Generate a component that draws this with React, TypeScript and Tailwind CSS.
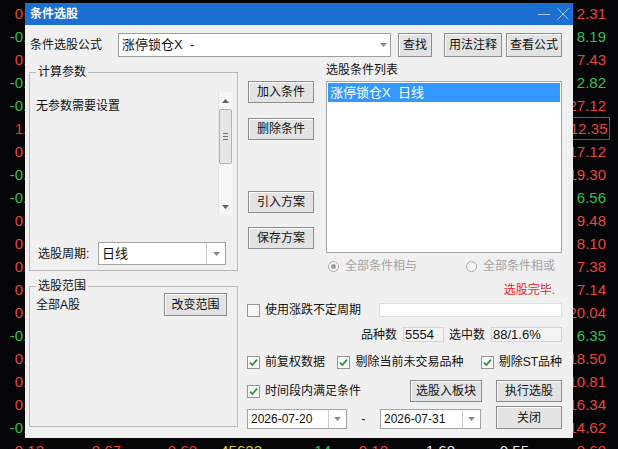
import React from "react";

const tone = {
  r: "text-[#e4463f]",
  R: "text-[#ff2f2a]",
  g: "text-[#2fc04d]",
  y: "text-[#d8c84a]",
  w: "text-[#e4e4e4]",
};

type Tone = keyof typeof tone;
type Cell = [string, Tone] | null;

const leftCol: [string, Tone][] = [
  ["0.35", "r"], ["-0.21", "g"], ["0.56", "r"], ["-0.44", "g"], ["-0.18", "g"],
  ["1.02", "R"], ["0.27", "r"], ["-0.36", "g"], ["-0.62", "g"], ["0.13", "r"],
  ["0.48", "r"], ["0.09", "r"], ["0.71", "r"], ["0.25", "r"], ["-0.33", "g"],
  ["0.52", "r"], ["0.17", "r"], ["0.84", "r"], ["-0.29", "g"],
];

const rightCol: [string, Tone][] = [
  ["2.31", "r"], ["8.19", "g"], ["7.43", "r"], ["2.82", "g"], ["27.12", "r"],
  ["12.35", "r"], ["17.12", "r"], ["19.30", "r"], ["6.56", "g"], ["9.48", "r"],
  ["8.10", "r"], ["7.38", "r"], ["7.14", "r"], ["20.04", "r"], ["6.35", "g"],
  ["18.50", "r"], ["10.81", "r"], ["16.34", "r"], ["14.62", "r"],
];

const lastRow: Cell[] = [
  ["0.12", "r"], ["0.67", "r"], ["0.68", "r"], ["45623", "y"], ["14", "g"],
  ["0.10", "r"], ["1.68", "w"], ["0.55", "w"], ["0.68", "r"],
];

const rows: Cell[][] = [
  ...leftCol.map((l, i) => [l, null, null, null, null, null, null, null, rightCol[i]] as Cell[]),
  lastRow,
];

function Arrow() {
  return (
    <svg width="7" height="4" viewBox="0 0 7 4">
      <path d="M0 0 H7 L3.5 4 Z" fill="#8a8a8a" />
    </svg>
  );
}

function Btn({ label, className }: { label: string; className: string }) {
  return (
    <button className={`flex items-center justify-center border border-[#8c8c8c] bg-[#e3e3e3] shadow-[inset_1px_1px_0_#fdfdfd] text-[12px] text-[#111] ${className}`}>
      {label}
    </button>
  );
}

function Check({ checked, label }: { checked?: boolean; label: string }) {
  return (
    <label className="flex items-center whitespace-nowrap">
      <span className="shrink-0 w-[13px] h-[13px] border border-[#959595] bg-[#f8f8f8] flex items-center justify-center">
        {checked && (
          <svg width="9" height="9" viewBox="0 0 9 9">
            <path d="M1 4.6 L3.4 7 L8 1.6" stroke="#23952c" strokeWidth="1.7" fill="none" />
          </svg>
        )}
      </span>
      <span className="ml-[5px] text-[12px]">{label}</span>
    </label>
  );
}

function Radio({ on, label }: { on?: boolean; label: string }) {
  return (
    <div className="flex items-center text-[#a3a3a3]">
      <span className="w-[11px] h-[11px] rounded-full border border-[#a8a8a8] bg-[#f6f6f6] flex items-center justify-center">
        {on && <span className="w-[5px] h-[5px] rounded-full bg-[#9c9c9c]" />}
      </span>
      <span className="ml-[6px] text-[12px]">{label}</span>
    </div>
  );
}

function DateBox({ value, className }: { value: string; className: string }) {
  return (
    <div className={`flex h-[20px] border border-[#a3a3a3] bg-white ${className}`}>
      <div className="flex-1 flex items-center pl-[3px] text-[12px]">{value}</div>
      <div className="w-[18px] border-l border-[#cdcdcd] flex items-center justify-center">
        <Arrow />
      </div>
    </div>
  );
}

export default function App() {
  return (
    <div className="relative w-[618px] h-[449px] overflow-hidden bg-[#050508] font-['Liberation_Sans','Noto_Sans_CJK_SC',sans-serif]">
      {/* quote table behind the dialog */}
      <div className="flex flex-col pt-[2px] text-[15px]">
        {rows.map((row, i) => (
          <div key={i} className="grid grid-cols-[44px_77px_76px_65px_69px_57px_67px_74px_77px] h-[23px] leading-[23px]">
            {row.map((c, j) => (
              <div key={j} className={`text-right ${c ? tone[c[1]] : ""}`}>
                {c && i === 5 && j === 8 ? (
                  <span className="inline-block border border-[#5c5c5c] pl-[40px] pr-[1px] -mr-[2px] leading-[21px]">{c[0]}</span>
                ) : (
                  c?.[0]
                )}
              </div>
            ))}
          </div>
        ))}
      </div>

      {/* 条件选股 dialog */}
      <div className="absolute left-[25px] top-[3px] w-[548px] h-[435px] bg-[#f0f0f0] flex flex-col text-[#111]">
        <div className="h-[22px] bg-[#1b6fd1] flex items-center pl-[5px] pr-[4px]">
          <span className="text-white text-[12px] font-bold">条件选股</span>
          <div className="ml-auto flex items-center gap-[7px]">
            <svg width="12" height="12" viewBox="0 0 12 12">
              <path d="M0 6.5 H12" stroke="#a9c8f0" strokeWidth="1" />
            </svg>
            <svg width="12" height="12" viewBox="0 0 12 12">
              <path d="M0.5 0.5 L11.5 11.5 M11.5 0.5 L0.5 11.5" stroke="#a9c8f0" strokeWidth="1" />
            </svg>
          </div>
        </div>

        <div className="flex flex-col pt-[8px] pl-[4px] pr-[11px]">
          {/* formula row */}
          <div className="flex items-center h-[24px]">
            <span className="w-[89px] pl-[1px] text-[12px]">条件选股公式</span>
            <div className="w-[273px] h-[24px] flex border border-[#9f9f9f] bg-white">
              <div className="flex-1 flex items-center pl-[3px] text-[13px] whitespace-pre">涨停锁仓X  -</div>
              <div className="w-[14px] flex items-center justify-center">
                <Arrow />
              </div>
            </div>
            <Btn label="查找" className="ml-[7px] w-[34px] h-[24px]" />
            <Btn label="用法注释" className="ml-[12px] w-[58px] h-[24px]" />
            <Btn label="查看公式" className="ml-[4px] w-[56px] h-[24px]" />
          </div>

          <div className="flex mt-[7px]">
            {/* left column */}
            <div className="w-[209px] flex flex-col">
              <fieldset className="h-[207px] border border-[#b9b9b9]">
                <legend className="ml-[6px] px-[2px] text-[12px] leading-[17px]">计算参数</legend>
                <div className="flex mt-[11px]">
                  <div className="flex-1 pl-[6px] pt-[6px] text-[12px] leading-[16px]">无参数需要设置</div>
                  <div className="w-[14px] h-[123px] mr-[5px] flex flex-col items-center bg-[#f7f7f7] border-l border-[#e4e4e4]">
                    <div className="h-[17px] flex items-center justify-center">
                      <svg width="7" height="4" viewBox="0 0 7 4">
                        <path d="M0 4 H7 L3.5 0 Z" fill="#5f5f5f" />
                      </svg>
                    </div>
                    <div className="w-[13px] h-[55px] border border-[#b3b3b3] rounded-[2px] bg-[#e6e6e6] flex flex-col items-center justify-center gap-[2px]">
                      <span className="w-[5px] h-px bg-[#6d6d6d]" />
                      <span className="w-[5px] h-px bg-[#6d6d6d]" />
                      <span className="w-[5px] h-px bg-[#6d6d6d]" />
                    </div>
                    <div className="flex-1" />
                    <div className="h-[17px] flex items-center justify-center">
                      <svg width="7" height="4" viewBox="0 0 7 4">
                        <path d="M0 0 H7 L3.5 4 Z" fill="#5f5f5f" />
                      </svg>
                    </div>
                  </div>
                </div>
                <div className="flex items-center mt-[27px]">
                  <span className="w-[68px] pl-[8px] text-[12px]">选股周期:</span>
                  <div className="w-[128px] h-[23px] flex border border-[#a3a3a3] bg-white">
                    <div className="flex-1 flex items-center pl-[3px] text-[13px]">日线</div>
                    <div className="w-[19px] border-l border-[#cdcdcd] flex items-center justify-center">
                      <Arrow />
                    </div>
                  </div>
                </div>
              </fieldset>

              <fieldset className="mt-[7px] h-[149px] border border-[#b9b9b9]">
                <legend className="ml-[6px] px-[2px] text-[12px] leading-[17px]">选股范围</legend>
                <div className="flex items-start justify-between -mt-[2px] pl-[6px] pr-[10px]">
                  <span className="mt-[4px] text-[12px] leading-[16px]">全部A股</span>
                  <Btn label="改变范围" className="w-[63px] h-[23px]" />
                </div>
              </fieldset>
            </div>

            {/* right area */}
            <div className="ml-[9px] w-[315px] flex flex-col">
              <div className="flex">
                <div className="w-[67px] pl-[1px] flex flex-col">
                  <Btn label="加入条件" className="mt-[17px] w-[66px] h-[22px]" />
                  <Btn label="删除条件" className="mt-[15px] w-[66px] h-[22px]" />
                  <Btn label="引入方案" className="mt-[51px] w-[66px] h-[22px]" />
                  <Btn label="保存方案" className="mt-[14px] w-[66px] h-[22px]" />
                </div>
                <div className="ml-[12px] w-[236px] flex flex-col">
                  <span className="text-[12px] leading-[12px]">选股条件列表</span>
                  <div className="mt-[5px] h-[172px] border border-[#a6a6a6] bg-white p-px">
                    <div className="h-[19px] bg-[#3399ff] text-white text-[13px] leading-[19px] pl-[2px] whitespace-pre">涨停锁仓X  日线</div>
                  </div>
                  <div className="mt-[6px] h-[14px] flex items-center justify-between pl-[2px] pr-[7px]">
                    <Radio on label="全部条件相与" />
                    <Radio label="全部条件相或" />
                  </div>
                </div>
              </div>

              <div className="mt-[10px] h-[14px] leading-[14px] text-right pr-[7px] text-[12px] text-[#e8262a]">选股完毕.</div>

              <div className="mt-[6px] h-[14px] flex items-center">
                <Check label="使用涨跌不定周期" />
                <div className="ml-auto w-[183px] h-[14px] border border-[#dedede] bg-white" />
              </div>

              <div className="mt-[10px] h-[15px] flex items-center justify-end text-[12px]">
                <span>品种数</span>
                <span className="ml-[6px] w-[41px] h-[15px] border border-[#d3d3d3] bg-[#f3f3f3] pl-px text-[13px] leading-[13px]">5554</span>
                <span className="ml-[5px]">选中数</span>
                <span className="ml-[6px] w-[71px] h-[15px] border border-[#d3d3d3] bg-[#f3f3f3] pl-px text-[13px] leading-[13px]">88/1.6%</span>
              </div>

              <div className="mt-[13px] h-[14px] flex items-center">
                <div className="w-[91px]">
                  <Check checked label="前复权数据" />
                </div>
                <div className="w-[144px]">
                  <Check checked label="剔除当前未交易品种" />
                </div>
                <Check checked label="剔除ST品种" />
              </div>

              <div className="mt-[11px] h-[22px] flex items-center">
                <Check checked label="时间段内满足条件" />
                <Btn label="选股入板块" className="ml-auto w-[72px] h-[22px]" />
                <Btn label="执行选股" className="ml-[14px] w-[66px] h-[22px]" />
              </div>

              <div className="mt-[4px] h-[23px] flex items-end">
                <DateBox value="2026-07-20" className="w-[100px]" />
                <span className="w-[33px] text-center text-[12px] leading-[20px]">-</span>
                <DateBox value="2026-07-31" className="w-[101px]" />
                <Btn label="关闭" className="ml-auto w-[66px] h-[23px]" />
              </div>
            </div>
          </div>
        </div>
      </div>
    </div>
  );
}
